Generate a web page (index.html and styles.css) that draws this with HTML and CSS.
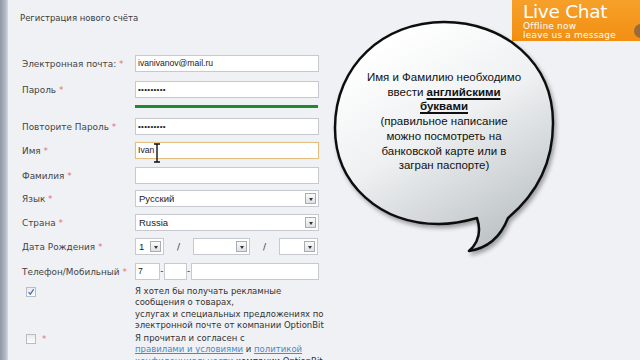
FILE: index.html
```html
<!DOCTYPE html>
<html lang="ru">
<head>
<meta charset="utf-8">
<link rel="stylesheet" href="styles.css">
</head>
<body>
<div class="page">
  <div class="edge"></div>
  <div class="main">
    <div class="title">Регистрация нового счёта</div>
    <div class="form">
      <div class="row r-email">
        <label class="lbl">Электронная почта: <span class="req">*</span></label>
        <div class="field"><div class="input">ivanivanov@mail.ru</div></div>
      </div>
      <div class="row r-pass">
        <label class="lbl">Пароль <span class="req">*</span></label>
        <div class="field"><div class="input dots">•••••••••</div></div>
      </div>
      <div class="row r-bar">
        <span></span>
        <div class="strength"></div>
      </div>
      <div class="row r-repeat">
        <label class="lbl">Повторите Пароль <span class="req">*</span></label>
        <div class="field"><div class="input dots">•••••••••</div></div>
      </div>
      <div class="row r-name">
        <label class="lbl">Имя <span class="req">*</span></label>
        <div class="field"><div class="input focus">Ivan</div>
          <svg class="ibeam" width="8" height="20" viewBox="0 0 8 20"><path d="M1 1h2.5l0.5 1 0.5-1H7M4 2v16M1 19h2.5l0.5-1 0.5 1H7" fill="none" stroke="#111" stroke-width="1.4"/></svg>
        </div>
      </div>
      <div class="row r-surname">
        <label class="lbl">Фамилия <span class="req">*</span></label>
        <div class="field"><div class="input"></div></div>
      </div>
      <div class="row r-lang">
        <label class="lbl">Язык <span class="req">*</span></label>
        <div class="field"><div class="select">Русский<span class="arrow"></span></div></div>
      </div>
      <div class="row r-country">
        <label class="lbl">Страна <span class="req">*</span></label>
        <div class="field"><div class="select">Russia<span class="arrow"></span></div></div>
      </div>
      <div class="row r-date">
        <label class="lbl">Дата Рождения <span class="req">*</span></label>
        <div class="field date">
          <div class="select s-day">1<span class="arrow"></span></div>
          <span class="slash">/</span>
          <div class="select s-month"><span class="arrow"></span></div>
          <span class="slash">/</span>
          <div class="select s-year"><span class="arrow"></span></div>
        </div>
      </div>
      <div class="row r-phone">
        <label class="lbl">Телефон/Мобильный <span class="req">*</span></label>
        <div class="field phone">
          <div class="input p1">7</div><span class="dash">-</span><div class="input p2"></div><span class="dash">-</span><div class="input p3"></div>
        </div>
      </div>
      <div class="row r-check1">
        <div class="cbcell"><span class="cb checked"><svg width="8" height="8" viewBox="0 0 8 8"><path d="M1.5 4.2l1.8 2L6.6 1.3" fill="none" stroke="#4a6fb0" stroke-width="1.2"/></svg></span></div>
        <div class="ctext">Я хотел бы получать рекламные<br>сообщения о товарах,<br>услугах и специальных предложениях по<br>электронной почте от компании OptionBit</div>
      </div>
      <div class="row r-check2">
        <div class="cbcell"><span class="cb"></span><span class="req">*</span></div>
        <div class="ctext">Я прочитал и согласен с<br><a href="#">правилами и условиями</a> и <a href="#">политикой</a><br><a href="#">конфиденциальности</a> компании OptionBit</div>
      </div>
    </div>
  </div>
</div>

<div class="livechat">
  <div class="lc-title">Live Chat</div>
  <div class="lc-sub">Offline now</div>
  <div class="lc-sub">leave us a message</div>
  <span class="lc-dot"></span>
</div>

<div class="bubble">
  <svg class="bubble-svg" width="250" height="260" viewBox="0 0 250 260">
    <defs>
      <linearGradient id="bg" x1="0.2" y1="0.1" x2="0.7" y2="1">
        <stop offset="0" stop-color="#ffffff"/>
        <stop offset="0.45" stop-color="#eef0f1"/>
        <stop offset="1" stop-color="#bcc2c5"/>
      </linearGradient>
      <filter id="sh" x="-10%" y="-10%" width="130%" height="130%">
        <feGaussianBlur in="SourceAlpha" stdDeviation="2"/>
        <feOffset dx="2" dy="3"/>
        <feComponentTransfer><feFuncA type="linear" slope="0.35"/></feComponentTransfer>
        <feMerge><feMergeNode/><feMergeNode in="SourceGraphic"/></feMerge>
      </filter>
    </defs>
    <path filter="url(#sh)" d="M177 198 C 208 172 222 140 222 103 C 222 42 173 2 113 2 C 53 2 4 45 4 108 C 4 165 50 204 108 204 C 120 204 132 202 146 198 C 150 210 148 222 138 231 C 158 228 170 216 177 198 Z" fill="url(#bg)" stroke="#111" stroke-width="2.5" stroke-linejoin="round"/>
  </svg>
  <div class="bubble-text">
    Имя и Фамилию необходимо<br>ввести <b><u>английскими </u></b><br><b><u>буквами</u></b><br>(правильное написание<br>можно посмотреть на<br>банковской карте или в<br>загран паспорте)
  </div>
</div>
</body>
</html>
```
FILE: styles.css
```css
* { box-sizing: border-box; }
html, body { margin: 0; padding: 0; }
body {
  width: 640px;
  height: 360px;
  overflow: hidden;
  background: #f0f1f5;
  font-family: "DejaVu Sans", Verdana, sans-serif;
  font-size: 8.5px;
  color: #333;
  position: relative;
}
.page { display: flex; height: 360px; }
.edge {
  width: 8px;
  flex: none;
  background: linear-gradient(to right, #8e97a4, #b4bbc5 70%, #d7dbe1);
}
.main { padding: 12px 0 0 12px; flex: 1; }
.title { font-size: 8.5px; color: #3a3a3a; height: 12px; line-height: 12px; }
.form { margin-top: 31px; padding-left: 2px; }
.row {
  display: grid;
  grid-template-columns: 113px 184px;
  align-items: center;
}
.lbl { color: #444; white-space: nowrap; font-size: 8.9px; }
.req { color: #e0736e; }
.field { position: relative; height: 17px; }
.input, .select {
  height: 17px;
  background: #fff;
  border: 1px solid #c6c9cf;
  font-family: "Liberation Sans", Arial, sans-serif;
  font-size: 8.6px;
  color: #222;
  line-height: 15px;
  padding-left: 2px;
  position: relative;
}
.dots { font-size: 8px; letter-spacing: 0.3px; }
.focus { border-color: #e3c07f; box-shadow: 0 0 1px #f0d8a8; }
.ibeam { position: absolute; left: 18px; top: 1px; }
.select { font-size: 9.5px; padding-left: 3px; }
.arrow {
  position: absolute;
  right: 2px;
  top: 2px;
  width: 11px;
  height: 11px;
  border: 1px solid #a9adb3;
  background: linear-gradient(#fafafa, #dfe1e4);
}
.arrow::after {
  content: "";
  position: absolute;
  left: 2.5px;
  top: 3.5px;
  border-left: 2.5px solid transparent;
  border-right: 2.5px solid transparent;
  border-top: 3px solid #333;
}
.r-email { margin-bottom: 9px; }
.r-pass { margin-bottom: 6px; }
.r-bar { height: 4px; margin-bottom: 10px; }
.strength { height: 3px; background: #1f8a2e; width: 183px; }
.r-repeat { margin-bottom: 7px; }
.r-name { margin-bottom: 8px; }
.r-surname { margin-bottom: 6px; }
.r-lang { margin-bottom: 7px; }
.r-country { margin-bottom: 7px; }
.r-date { margin-bottom: 8px; }
.r-phone { margin-bottom: 6px; }
.date { display: flex; align-items: center; }
.s-day { width: 29px; }
.s-month { width: 57px; }
.s-year { width: 39px; }
.slash { width: 29px; text-align: center; font-size: 9px; color: #333; }
.phone { display: flex; align-items: center; }
.p1 { width: 25px; }
.p2 { width: 23px; }
.p3 { width: 129px; }
.dash { width: 4px; text-align: center; font-size: 9px; line-height: 1; }
.r-check1, .r-check2 { align-items: start; }
.r-check1 { margin-bottom: 2px; }
.cbcell { display: flex; align-items: center; gap: 6px; padding-left: 4px; padding-top: 1px; }
.cb {
  width: 10px; height: 10px;
  border: 1px solid #b9bcc2;
  background: linear-gradient(#e8eaee, #fdfdfd);
  display: flex; align-items: center; justify-content: center;
}
.ctext { line-height: 11.3px; color: #333; white-space: nowrap; width: 200px; }
.ctext a { color: #4a8ac0; }

.livechat {
  position: absolute;
  left: 512px;
  top: 0;
  width: 128px;
  height: 41px;
  background: linear-gradient(#f7a02a, #f28f12);
  color: #fff;
  padding: 1px 0 0 11px;
  overflow: hidden;
}
.lc-title { font-family: "DejaVu Sans", sans-serif; font-size: 18.5px; line-height: 21px; letter-spacing: -0.3px; }
.lc-sub { font-family: "DejaVu Sans", sans-serif; font-size: 9px; line-height: 9px; letter-spacing: 0.2px; }
.lc-dot {
  position: absolute; right: -8px; top: 24px;
  width: 14px; height: 14px; border-radius: 50%;
  background: #9a6a3a;
}

.bubble { position: absolute; left: 331px; top: 20px; width: 250px; height: 260px; }
.bubble-svg { position: absolute; left: 0; top: 0; }
.bubble-text {
  position: absolute;
  left: 12px;
  top: 50px;
  width: 202px;
  text-align: center;
  font-family: "Liberation Sans", Arial, sans-serif;
  font-size: 11.5px;
  line-height: 14.7px;
  color: #111;
}
.bubble-text u { text-decoration-thickness: 1.5px; text-underline-offset: 2px; }
```
